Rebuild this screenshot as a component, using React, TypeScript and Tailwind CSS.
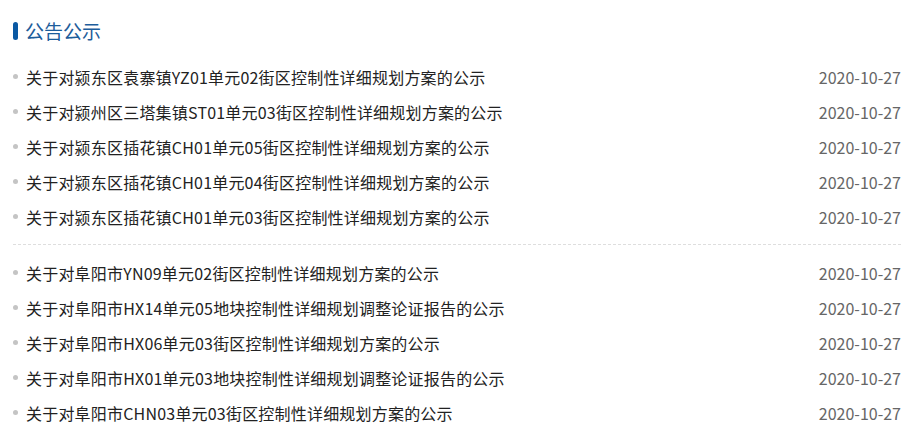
const groupA = [
  '关于对颍东区袁寨镇YZ01单元02街区控制性详细规划方案的公示',
  '关于对颍州区三塔集镇ST01单元03街区控制性详细规划方案的公示',
  '关于对颍东区插花镇CH01单元05街区控制性详细规划方案的公示',
  '关于对颍东区插花镇CH01单元04街区控制性详细规划方案的公示',
  '关于对颍东区插花镇CH01单元03街区控制性详细规划方案的公示',
];

const groupB = [
  '关于对阜阳市YN09单元02街区控制性详细规划方案的公示',
  '关于对阜阳市HX14单元05地块控制性详细规划调整论证报告的公示',
  '关于对阜阳市HX06单元03街区控制性详细规划方案的公示',
  '关于对阜阳市HX01单元03地块控制性详细规划调整论证报告的公示',
  '关于对阜阳市CHN03单元03街区控制性详细规划方案的公示',
];

function Row({ title }: { title: string }) {
  return (
    <li className="flex items-center h-[35px]">
      <span className="w-[5px] h-[5px] rounded-full bg-[#c4c4c4] ml-[13px] mr-[8px] shrink-0" />
      <a className="flex-1 text-[16px] tracking-[0.2px] text-[#222] truncate cursor-pointer">{title}</a>
      <span className="text-[16px] text-[#666] pr-[11px]">2020-10-27</span>
    </li>
  );
}

export default function App() {
  return (
    <div className="w-[912px] h-[440px] bg-white font-['Noto_Sans_CJK_SC','Microsoft_YaHei',sans-serif] overflow-hidden">
      {/* Header */}
      <div className="flex items-center pt-[19px] pl-[13px] h-[42px]">
        <span className="w-[5px] h-[18px] rounded-full bg-[#0a59a3]" />
        <h2 className="ml-[7px] text-[19px] text-[#1d5d9b] leading-none">公告公示</h2>
      </div>

      <ul className="mt-[17px]">
        {groupA.map((t) => (
          <Row key={t} title={t} />
        ))}
      </ul>

      <div className="mx-[13px] mr-[11px] my-[10px] border-t border-dashed border-[#dedede]" />

      <ul>
        {groupB.map((t) => (
          <Row key={t} title={t} />
        ))}
      </ul>
    </div>
  );
}
